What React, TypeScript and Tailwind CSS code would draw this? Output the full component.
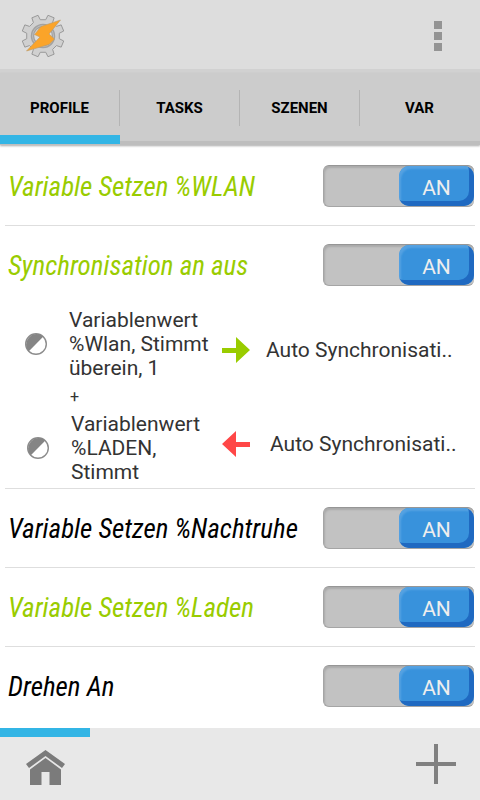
import React, { useState } from "react";

interface Profile {
  id: string;
  name: string;
  active: boolean;
}

const tabs = ["PROFILE", "TASKS", "SZENEN", "VAR"];

const profiles: Profile[] = [
  { id: "wlan", name: "Variable Setzen %WLAN", active: true },
  { id: "sync", name: "Synchronisation an aus", active: true },
  { id: "nachtruhe", name: "Variable Setzen %Nachtruhe", active: false },
  { id: "laden", name: "Variable Setzen %Laden", active: true },
  { id: "drehen", name: "Drehen An", active: false },
];

// Outline of the eight toothed wheel around 0,0
const gearPath = () => {
  const points: string[] = [];
  for (let i = 0; i < 8; i++) {
    const mid = 22.5 + i * 45;
    [[-13, 16.5], [-9, 21.3], [9, 21.3], [13, 16.5]].forEach(([offset, r]) => {
      const a = ((mid + offset) * Math.PI) / 180;
      points.push(`${(r * Math.cos(a)).toFixed(2)} ${(r * Math.sin(a)).toFixed(2)}`);
    });
  }
  return `M${points.join("L")}Z`;
};

function Logo() {
  return (
    <svg width="44" height="44" viewBox="-22 -22 44 44" aria-hidden="true">
      <path d={gearPath()} fill="#d0d0d0" stroke="#999" strokeWidth="1" strokeLinejoin="round" />
      <circle r="10.500" fill="#dcdcdc" stroke="#a2a2a2" strokeWidth="3.5" />
      <circle r="10.500" fill="none" stroke="#bdbdbd" strokeWidth="1" />
      <path
        d="M17.500 -16L-2 -9.500L-8.500 -1.500L-3 1L-16.500 15L6 8.500L11.500 3L6 -2Z"
        fill="#fba429"
        stroke="#b99a6c"
        strokeWidth="0.6"
      />
    </svg>
  );
}

function StateIcon() {
  return (
    <svg width="24" height="24" viewBox="0 0 24 24" className="shrink-0" aria-hidden="true">
      <circle cx="12" cy="12" r="10.300" fill="#fff" stroke="#8c8c8c" strokeWidth="1.4" />
      <path d="M4.600 19.400A10.500 10.500 0 0 1 19.400 4.600Z" fill="#858585" />
    </svg>
  );
}

function Arrow({ exit }: { exit?: boolean }) {
  return (
    <svg width="28" height="26" viewBox="0 0 28 26" className="shrink-0" aria-hidden="true">
      {exit ? (
        <path d="M0 13L14 0V11H28V16H14V26Z" fill="#ff4747" />
      ) : (
        <path d="M28 13L14 0V11H0V16H14V26Z" fill="#99cc00" />
      )}
    </svg>
  );
}

function Toggle({ id }: { id: string }) {
  const [on, setOn] = useState(true);
  return (
    <label
      htmlFor={id}
      className={`flex h-[42px] w-[151px] shrink-0 cursor-pointer rounded-md border border-r-0 border-[#a5a5a5] border-t-[#969696] bg-[#c2c2c2] shadow-[inset_1px_2px_2px_#aaa] ${on ? "justify-end" : "justify-start"}`}
    >
      <input
        id={id}
        type="checkbox"
        role="switch"
        aria-labelledby={`${id}-name`}
        checked={on}
        onChange={(e) => setOn(e.target.checked)}
        className="sr-only"
      />
      <span className="flex h-10 w-[75px] items-center justify-center rounded-[10px] bg-[#3892dc] pt-1 text-[21px] leading-6 text-[#eee] shadow-[inset_-5px_-5px_0_#1f69c1,inset_2px_3px_2px_#55a2e2]">
        {on ? "AN" : "AUS"}
      </span>
    </label>
  );
}

function ProfileDetails() {
  return (
    <div className="py-1 text-[21px] leading-6 text-[#333]">
      <div className="flex items-center pl-[19px]">
        <StateIcon />
        <p className="ml-[21px] w-[153px] whitespace-nowrap">
          Variablenwert
          <br />
          %Wlan, Stimmt
          <br />
          überein, 1
        </p>
        <div className="flex items-center gap-4 pt-3">
          <Arrow />
          <p className="whitespace-nowrap">Auto Synchronisati..</p>
        </div>
      </div>
      <p className="pt-[5px] pb-[3px] pl-[65px] text-base leading-6">+</p>
      <div className="flex items-center pl-[21px]">
        <StateIcon />
        <p className="ml-[21px] w-[151px] whitespace-nowrap">
          Variablenwert
          <br />
          %LADEN,
          <br />
          Stimmt
        </p>
        <div className="flex items-center gap-5 pb-2">
          <Arrow exit />
          <p className="whitespace-nowrap">Auto Synchronisati..</p>
        </div>
      </div>
    </div>
  );
}

export default function App() {
  const [tab, setTab] = useState("PROFILE");

  return (
    <div className="flex min-h-screen flex-col bg-white font-[Roboto,sans-serif]">
      <header className="flex h-[73px] items-center justify-between border-b-4 border-[#d1d1d1] bg-[#dddddd] pt-[2px] pr-[38px] pl-[21px]">
        <Logo />
        <button type="button" aria-label="Menü" className="flex flex-col gap-[3px]">
          <span className="size-2 bg-[#949494]" />
          <span className="size-2 bg-[#949494]" />
          <span className="size-2 bg-[#949494]" />
        </button>
      </header>

      {/* Tabs */}
      <nav className="grid h-[72px] grid-cols-4 bg-[#cccccc] pb-px shadow-[inset_0_-4px_0_#bebebe,0_1px_2px_#aaa]">
        {tabs.map((name) => (
          <button
            key={name}
            type="button"
            onClick={() => setTab(name)}
            className={`group flex items-center border-b-9 pt-2 text-[15px] font-bold text-black ${tab === name ? "border-[#33b5e5]" : "border-transparent"}`}
          >
            <span className="flex h-9 w-full items-center justify-center border-r border-[#b4b4b4] group-last:border-transparent">
              {name}
            </span>
          </button>
        ))}
      </nav>

      {/* Profile list */}
      <main className="flex-1 px-[5px] pt-[2px]">
        <ul className="divide-y divide-[#dedede]">
          {profiles.map((profile) => (
            <li key={profile.id}>
              <div className="flex h-[78px] items-center justify-between pr-px pl-[3px]">
                <h2
                  id={`${profile.id}-name`}
                  className={`pt-[2px] font-['Roboto_Condensed',Roboto,sans-serif] text-[27px] leading-8 italic whitespace-nowrap ${profile.active ? "text-[#99cc00]" : "text-black"}`}
                >
                  {profile.name}
                </h2>
                <Toggle id={profile.id} />
              </div>
              {profile.id === "sync" && <ProfileDetails />}
            </li>
          ))}
        </ul>
      </main>

      {/* Project bar */}
      <footer className="h-[72px] bg-[#e8e8e8]">
        <div className="h-[9px] w-[90px] bg-[#33b5e5]" />
        <div className="flex h-[62px] items-center justify-between pr-6 pl-[26px]">
          <button type="button" aria-label="Home">
            <svg width="39" height="36" viewBox="0 0 39 36" fill="#7b7b7b" aria-hidden="true">
              <path d="M19.500 0L0 14L3 18L19.500 6L36 18L39 14Z" />
              <path d="M19.500 8L4 19.500V35H15.500V22H23.500V35H35V19.500Z" />
            </svg>
          </button>
          <button type="button" aria-label="Hinzufügen" className="pb-2">
            <svg width="40" height="40" viewBox="0 0 40 40" fill="#808080" aria-hidden="true">
              <path d="M18 0H22V18H40V22H22V40H18V22H0V18H18Z" />
            </svg>
          </button>
        </div>
      </footer>
    </div>
  );
}
